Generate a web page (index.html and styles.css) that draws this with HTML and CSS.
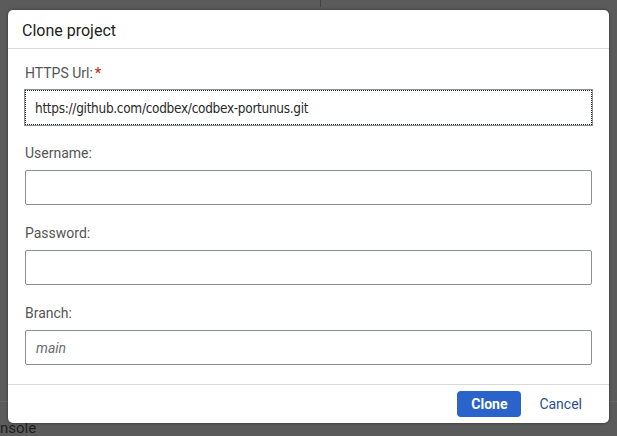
FILE: index.html
```html
<!DOCTYPE html>
<html>
<head>
<meta charset="utf-8">
<link rel="stylesheet" href="styles.css">
</head>
<body>
<div class="backdrop">
  <div class="topbar"><div class="pane"></div><div class="pane"></div></div>
  <div class="spacer"></div>
  <div class="console">nsole</div>
</div>
<div class="dialog">
  <div class="dialog-header">Clone project</div>
  <div class="dialog-body">
    <div class="field">
      <label class="label">HTTPS Url:<span class="req">*</span></label>
      <div class="input focused"><span class="value">https://github.com/codbex/codbex-portunus.git</span></div>
    </div>
    <div class="field">
      <label class="label">Username:</label>
      <div class="input"></div>
    </div>
    <div class="field">
      <label class="label">Password:</label>
      <div class="input"></div>
    </div>
    <div class="field">
      <label class="label">Branch:</label>
      <div class="input"><span class="placeholder">main</span></div>
    </div>
  </div>
  <div class="dialog-footer">
    <button class="btn primary">Clone</button>
    <button class="btn link">Cancel</button>
  </div>
</div>
</body>
</html>
```
FILE: styles.css
```css
html, body {
  margin: 0;
  padding: 0;
  width: 617px;
  height: 436px;
  overflow: hidden;
  background: #5b5b5b;
  font-family: Roboto, "Liberation Sans", Arial, sans-serif;
}
.backdrop {
  display: flex;
  flex-direction: column;
  height: 436px;
}
.topbar {
  display: flex;
  height: 12px;
}
.pane {
  flex: 0 0 320px;
  border-right: 1px solid #444;
}
.pane + .pane { flex: 1; border-right: none; }
.spacer {
  flex: 0 0 394px;
  border-bottom: 1px solid #6a6a6a;
}
.console {
  font-size: 15px;
  color: #1e1e1e;
  padding-top: 19px;
  line-height: 15px;
}
.dialog {
  position: absolute;
  left: 8px;
  top: 10px;
  width: 601px;
  height: 413px;
  background: #fff;
  border-radius: 5px;
  box-shadow: 0 0 3px rgba(0,0,0,0.5);
  display: flex;
  flex-direction: column;
}
.dialog-header {
  height: 39px;
  box-sizing: border-box;
  padding: 11px 14px 0;
  font-size: 16px;
  color: #222;
  border-bottom: 1px solid #d9d9d9;
}
.dialog-body {
  flex: 1;
  padding: 16px 17px 0;
  display: flex;
  flex-direction: column;
  gap: 20px;
}
.field {
  display: flex;
  flex-direction: column;
  gap: 8px;
}
.label {
  font-size: 14px;
  line-height: 17px;
  color: #555;
}
.req { color: #c0392b; font-weight: bold; margin-left: 2px; }
.input {
  height: 35px;
  box-sizing: border-box;
  border: 1px solid #8a8f96;
  border-radius: 2px;
  padding: 0 9px;
  display: flex;
  align-items: center;
  color: #2b2b2b;
}
.value {
  font-family: "DejaVu Sans Condensed", "DejaVu Sans", Roboto, sans-serif;
  font-stretch: condensed;
  font-size: 13.5px;
  letter-spacing: -0.3px;
  color: #2b2b2b;
}
.input.focused {
  border: 1px dotted #222;
  outline: 1px solid #8a8f96;
  outline-offset: 0;
  border-radius: 0;
}
.placeholder { font-style: italic; color: #6a6d70; font-size: 14px; padding-left: 1px; }
.dialog-footer {
  height: 39px;
  box-sizing: border-box;
  border-top: 1px solid #d9d9d9;
  display: flex;
  justify-content: flex-end;
  align-items: center;
  gap: 8px;
  padding: 0 17px 1px 0;
}
.btn {
  font-family: inherit;
  font-size: 14px;
  border: none;
  background: none;
  cursor: pointer;
  height: 26px;
  padding: 0 10px;
}
.btn.primary {
  background: #2a63c9;
  color: #fff;
  font-weight: bold;
  border-radius: 4px;
  width: 64px;
}
.btn.link {
  color: #2b4f8f;
}
```
